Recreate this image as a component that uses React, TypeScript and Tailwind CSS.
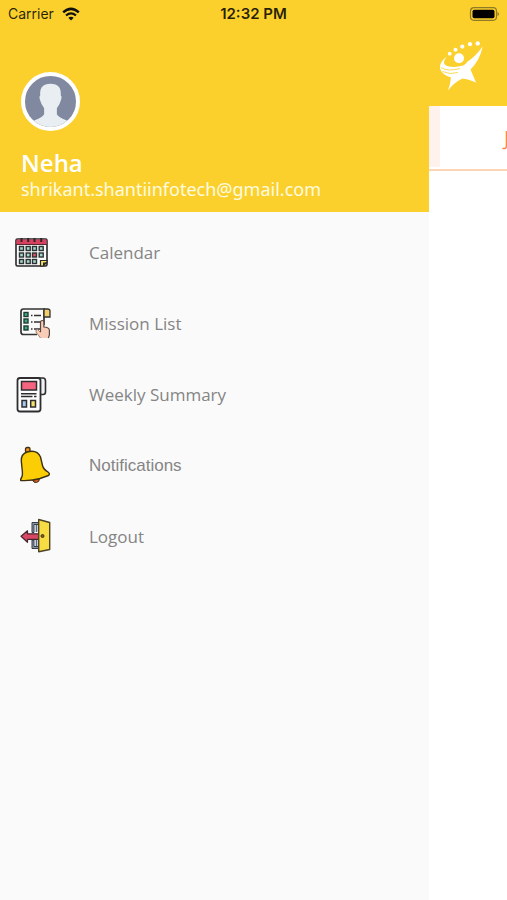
import { ReactNode } from "react";
import clsx from "clsx";

const CalendarIcon = () => (
  <svg viewBox="0 -1 40 41" className="w-10 h-[41px]" fill="none" aria-hidden="true">
    <rect x="4" y="6" width="31" height="27" rx="1.5" fill="#fafafa" stroke="#2b2729" strokeWidth="1.6" />
    <path d="M4.5 6.5h30v4.5h-30z" fill="#d8405f" />
    <path d="M4 11.5h31" stroke="#5b2631" strokeWidth="1" />
    <path d="M9.5 5v4M16.2 5v4M22.5 5v4M29.2 5v4" stroke="#2b2729" strokeWidth="2" />
    {[15.5, 22, 28.5].map((y) =>
      [9.5, 16.2, 22.5, 29.2].map((x) =>
        x === 29.2 && y === 28.5 ? null : (
          <rect
            key={`${x}-${y}`}
            x={x - 2}
            y={y - 2}
            width="4"
            height="4"
            fill={x === 22.5 && y === 22 ? "#e0506b" : "#a9d3cb"}
            stroke="#2b3433"
            strokeWidth="1.4"
          />
        )
      )
    )}
    <path d="M28.5 33v-5.5H35V29l-4 4z" fill="#f1e46a" stroke="#2b2729" strokeWidth="1.2" />
    <path d="M31 33.5v-4h4.5z" fill="#2b2729" />
  </svg>
);

const MissionIcon = () => (
  <svg viewBox="0 -1 40 41" className="w-10 h-[41px]" fill="none" aria-hidden="true">
    <path d="M33 5H11.5Q9 5 9 7.5V28Q9 30.5 11.5 30.5H25M32 6v15" stroke="#333" strokeWidth="1.7" />
    <path d="M32 5h3.5Q38 5 38 7v6h-6z" fill="#f3cf6c" stroke="#333" strokeWidth="1.3" />
    {[10.5, 17, 24].map((y) => (
      <g key={y}>
        <rect x="12" y={y - 2} width="4" height="4" fill="#3fa882" stroke="#1f3d35" strokeWidth="1.4" />
        <path d={`M19 ${y + 1}h1.5M22 ${y + 1}h7`} stroke="#333" strokeWidth="1.5" />
      </g>
    ))}
    <path
      d="M28.5 28V18.5q0-2 1.7-2t1.7 2V23q5 0 5.5 3V31l-1 3h-8L24 28q-.5-3 1.5-2.500z"
      fill="#f7cdb8"
    />
    <path d="M28.5 28V18.5q0-2 1.7-2t1.7 2V23q5 0 5.5 3V31l-1 3" stroke="#5a463f" strokeWidth="1.2" />
    <path d="M28.5 34L24 28q-.5-3 1.5-2.500l3 3" stroke="#a37f70" strokeWidth="1" />
  </svg>
);

const SummaryIcon = () => (
  <svg viewBox="0 -1 40 41" className="w-10 h-[41px]" fill="none" stroke="#2e2d30" aria-hidden="true">
    <path d="M26 3h5q2.5 0 2.5 3v11q0 2.5-2.5 2.5h-2.5" fill="#eef0f1" strokeWidth="1.6" />
    <rect x="5.5" y="3" width="23" height="33.5" rx="2.5" fill="#fdfdfd" strokeWidth="1.8" />
    <rect x="9.5" y="6.5" width="15" height="8.5" fill="#f4647f" strokeWidth="1.5" />
    <path d="M9 18.7h15.5M9 21.5h11.5M22 21.5h2.5" strokeWidth="1.4" />
    <rect x="10" y="25.5" width="4.5" height="6.5" fill="#a7c8ef" strokeWidth="1.5" />
    <rect x="18.7" y="25.5" width="4.8" height="6.5" fill="#f5e067" strokeWidth="1.5" />
  </svg>
);

const BellIcon = () => (
  <svg viewBox="0 -1 40 41" className="w-10 h-[41px]" stroke="#3e3110" strokeLinejoin="round" aria-hidden="true">
    <path d="M20.5 34q1 3 4 2.500t3-4z" fill="#d4562a" strokeWidth="1" />
    <rect x="13.5" y="1.5" width="4.5" height="5" rx="1.5" fill="#ef8f25" strokeWidth="1.3" />
    <path
      d="M8.7 34.500Q8.500 33 9.8 31Q11 29 10 22L9.3 15Q9 8 15 6Q25 3 28.5 11L30.500 19.500Q31.500 23.500 36 26Q38.500 28 36.500 29.500L28 32.500Q20 35 8.7 34.500Z"
      fill="#fbcd05"
      strokeWidth="1.4"
    />
  </svg>
);

const LogoutIcon = () => (
  <svg viewBox="0 -1 40 41" className="w-10 h-[41px]" strokeLinejoin="round" aria-hidden="true">
    <path d="M27 5.5h-7v10h2v-8h5zM27 31.5h-7V23h2v6.5h5z" fill="#8b96a3" stroke="#353c4b" strokeWidth="1" />
    <path d="M24.5 8v7M24.5 23v6" stroke="#52698c" strokeWidth="1.6" />
    <path d="M9 19.3l6.5-5.500v3H27v5.500H15.500v3z" fill="#d94862" stroke="#432630" strokeWidth="1.2" />
    <path d="M26.7 2.5l11 3v27l-11 2.200z" fill="#f7dc43" stroke="#4b4323" strokeWidth="1.4" />
    <circle cx="30.5" cy="19" r="1.5" fill="#8a5a20" stroke="#3c3220" strokeWidth="1" />
  </svg>
);

const Logo = () => (
  <svg viewBox="0 0 44 52" className="w-11 h-[52px]" fill="#fff" role="img" aria-label="Logo">
    <circle cx="10.7" cy="13.7" r="1.9" />
    <circle cx="16.5" cy="9.8" r="2" />
    <circle cx="23.3" cy="6.6" r="2.1" />
    <circle cx="31" cy="4.2" r="2.1" />
    <circle cx="38.7" cy="3.4" r="2.2" />
    <circle cx="20" cy="18.3" r="5" />
    <path d="M8 16.500Q0 22 1 28.500Q2.500 34.500 12 37.500Q11.500 43 9 50.500Q15 42.500 23.500 38.500Q29 39 37 42.500L31.500 29.500Q41 20 43.700 6.500Q36 17 28 22Q26.500 25 22 26Q12 28 7 25.500Q2.500 22.500 8 16.500Z" />
    <path d="M2 27.500Q9 32 21 28.500M3.500 31.500Q11 35 19 32.500" fill="none" stroke="#fbd02c" strokeWidth=".8" />
  </svg>
);

const Avatar = () => (
  <div className="size-[59px] rounded-full border-4 border-white bg-[#8189a1] overflow-hidden">
    <svg viewBox="0 0 52 52" className="size-full" fill="#e8eef1" aria-hidden="true">
      <path d="M26 8C18 8 15 12 15.5 20Q14 21 15.5 25Q16.5 29 19.5 33V39Q18 42 10 45L6 48V52H47V48L42 45Q34 42 32.5 39V33Q35.5 29 36.5 25Q38 21 36.5 20C37 12 34 8 26 8Z" />
    </svg>
  </div>
);

const StatusBar = () => (
  <header className="grid grid-cols-3 items-center h-7 px-2 bg-[#fbd02c] text-black/85 font-['Inter',sans-serif] text-sm">
    <div className="flex items-center gap-2">
      <span>Carrier</span>
      <svg viewBox="0 0 18 14" className="w-[18px] h-[14px]" aria-hidden="true">
        <path d="M1.2 5.4Q9-1.600 16.800 5.400" fill="none" stroke="#111" strokeWidth="2.5" />
        <path d="M4 8.5Q9 4.200 14 8.500" fill="none" stroke="#111" strokeWidth="2.3" />
        <path d="M6.3 10.7Q9 8.600 11.700 10.700L9 13.500Z" fill="#111" />
      </svg>
    </div>
    <span className="text-center font-semibold text-[15px]">12:32 PM</span>
    <svg viewBox="0 0 31 14" className="w-[31px] h-[14px] justify-self-end" aria-hidden="true">
      <rect x="2.5" y=".7" width="26" height="12.6" rx="3.5" fill="none" stroke="#8f7a27" strokeWidth="1.2" />
      <rect x="4.5" y="2.7" width="22" height="8.6" rx="1.7" fill="#000" />
      <path d="M29.5 5v4q1.500-.5 1.500-2t-1.500-2z" fill="#8f7a27" />
    </svg>
  </header>
);

type MenuItem = { label: string; icon: ReactNode; system?: boolean };

const menu: MenuItem[] = [
  { label: "Calendar", icon: <CalendarIcon /> },
  { label: "Mission List", icon: <MissionIcon /> },
  { label: "Weekly Summary", icon: <SummaryIcon /> },
  { label: "Notifications", icon: <BellIcon />, system: true },
  { label: "Logout", icon: <LogoutIcon /> },
];

function App() {
  return (
    <div className="flex flex-col min-h-screen bg-white font-['Open_Sans',sans-serif]">
      <StatusBar />
      <div className="flex flex-1">
        <aside className="flex flex-col flex-1 bg-[#fafafa]">
          <div className="h-[184px] pt-11 px-[21px] bg-[#fbd02c] text-white">
            <Avatar />
            <h1 className="mt-4 text-2xl font-semibold">Neha</h1>
            <p className="font-['Noto_Sans',sans-serif] text-lg leading-5 text-[#fffbe0]">
              shrikant.shantiinfotech@gmail.com
            </p>
          </div>
          <nav className="pt-[5px]">
            {menu.map((item) => (
              <a
                key={item.label}
                href="#"
                className={clsx(
                  "flex items-center gap-[37px] h-[71px] pl-3 text-[17px] text-[#858585]",
                  item.system && "font-['Liberation_Sans',sans-serif]"
                )}
              >
                {item.icon}
                {item.label}
              </a>
            ))}
          </nav>
        </aside>

        <main className="w-[78px] overflow-hidden">
          <div className="h-[78px] pt-3 pl-[10px] bg-[#fbd02c]">
            <Logo />
          </div>
          <div className="flex h-[65px] border-b-2 border-[#fdd5b5]">
            <div className="w-[11px] h-[61px] shrink-0 bg-[#fff2ec]" />
            <div className="flex items-center pl-16 text-xl text-[#f58a50]">J</div>
          </div>
        </main>
      </div>
    </div>
  );
}

export default App;
